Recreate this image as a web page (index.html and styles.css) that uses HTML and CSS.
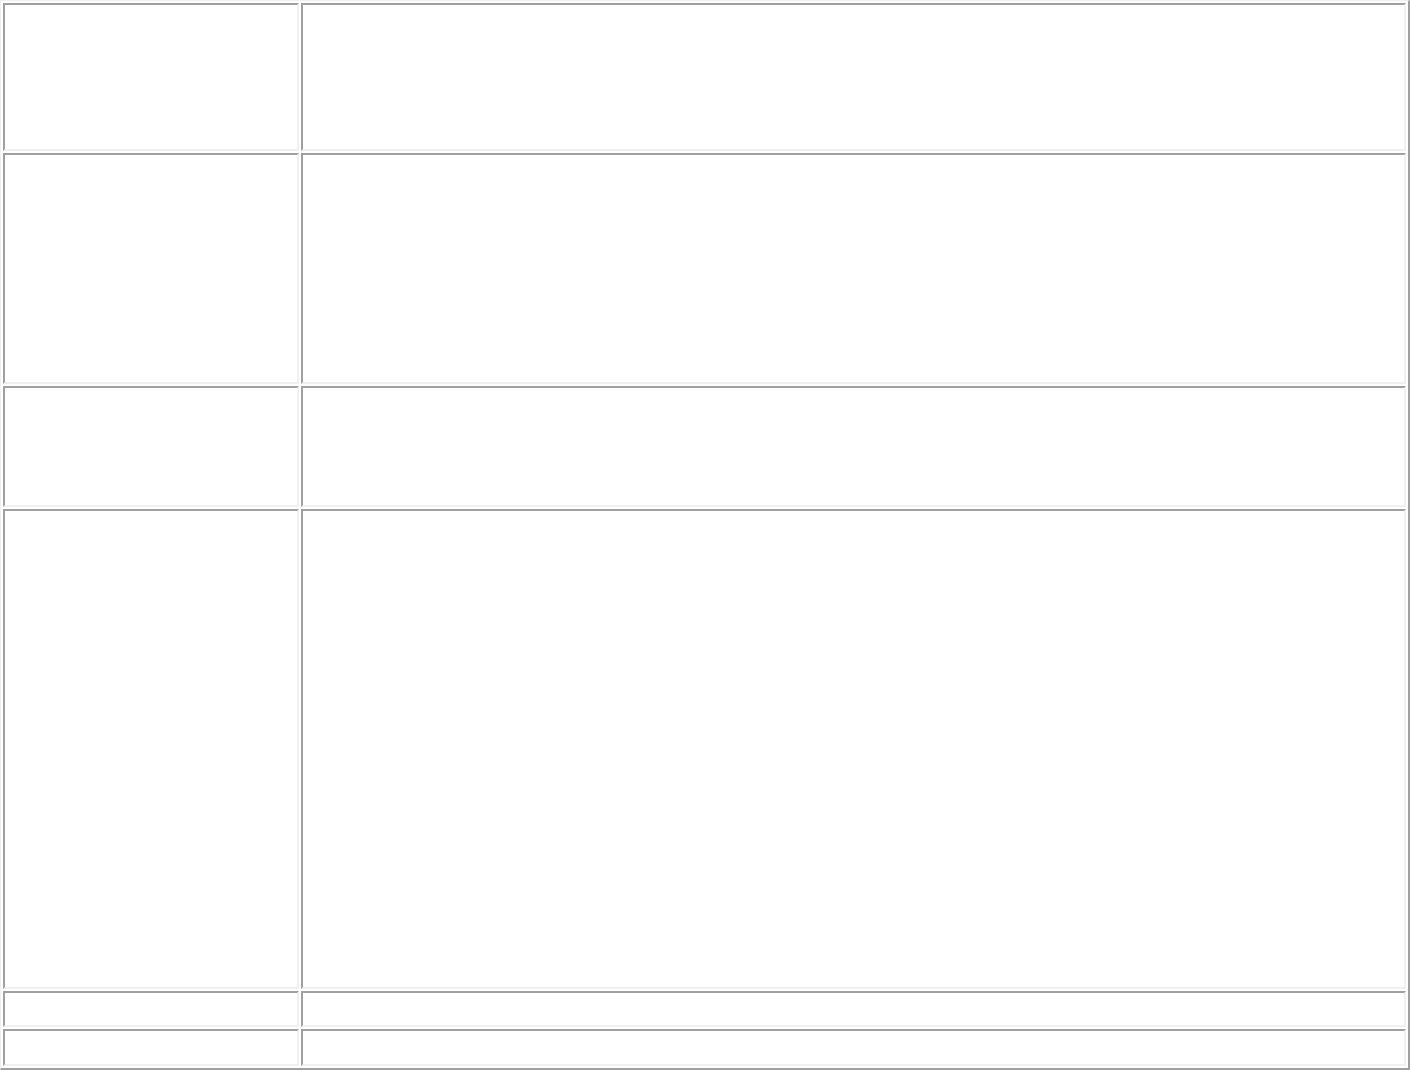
FILE: index.html
```html
<!DOCTYPE html>
<html>
<head>
<meta charset="utf-8">
<link rel="stylesheet" href="styles.css">
</head>
<body>
<table class="grid">
  <tr><td class="c1"><div class="h1"></div></td><td class="c2"></td></tr>
  <tr><td class="c1"><div class="h2"></div></td><td class="c2"></td></tr>
  <tr><td class="c1"><div class="h3"></div></td><td class="c2"></td></tr>
  <tr><td class="c1"><div class="h4"></div></td><td class="c2"></td></tr>
  <tr><td class="c1"><div class="h5"></div></td><td class="c2"></td></tr>
  <tr><td class="c1"><div class="h6"></div></td><td class="c2"></td></tr>
</table>
</body>
</html>
```
FILE: styles.css
```css
html, body {
  margin: 0;
  padding: 0;
  background: #ffffff;
  font-family: "Liberation Serif", serif;
}
.grid {
  width: 1410px;
  border-collapse: separate;
  border-spacing: 2px;
  border-style: solid;
  border-width: 1px 2px 2px 1px;
  border-color: #f0f0f0 #a0a0a0 #a0a0a0 #f0f0f0;
}
.grid td {
  padding: 1px;
  border-style: solid;
  border-width: 2px;
  border-color: #a0a0a0 #f0f0f0 #f0f0f0 #a0a0a0;
}
.c1 { width: 290px; }
.h1 { height: 142px; }
.h2 { height: 225px; }
.h3 { height: 115px; }
.h4 { height: 474px; }
.h5 { height: 30px; }
.h6 { height: 31px; }
```
